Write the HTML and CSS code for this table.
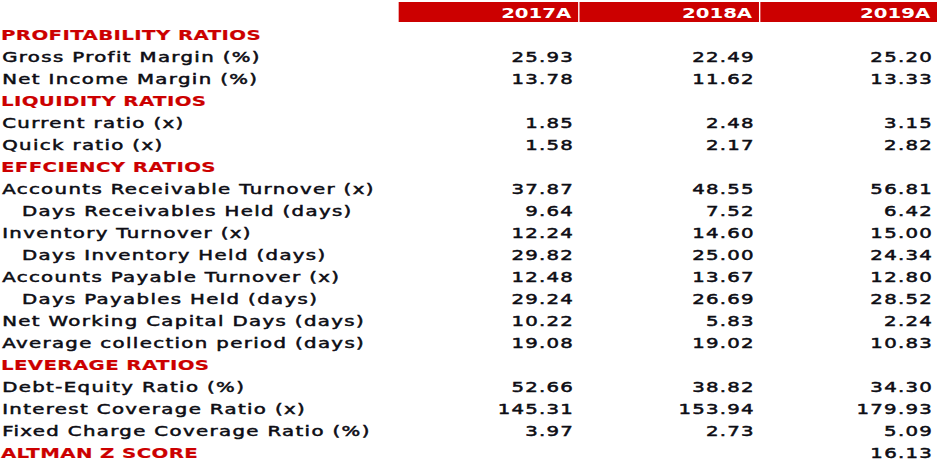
FILE: index.html
```html
<!DOCTYPE html>
<html lang="en">
<head>
<meta charset="utf-8">
<title>Financial Ratios</title>
<link rel="stylesheet" href="styles.css">
</head>
<body>
<div class="sheet">
  <div class="row head">
    <div class="cell blank"></div>
    <div class="cell year">2017A</div>
    <div class="cell year sep">2018A</div>
    <div class="cell year sep">2019A</div>
  </div>
  <div class="body">
    <div class="row"><div class="cell title">PROFITABILITY RATIOS</div><div class="cell"></div><div class="cell"></div><div class="cell"></div></div>
    <div class="row"><div class="cell label">Gross Profit Margin (%)</div><div class="cell num">25.93</div><div class="cell num">22.49</div><div class="cell num">25.20</div></div>
    <div class="row"><div class="cell label">Net Income Margin (%)</div><div class="cell num">13.78</div><div class="cell num">11.62</div><div class="cell num">13.33</div></div>
    <div class="row"><div class="cell title">LIQUIDITY RATIOS</div><div class="cell"></div><div class="cell"></div><div class="cell"></div></div>
    <div class="row"><div class="cell label">Current ratio (x)</div><div class="cell num">1.85</div><div class="cell num">2.48</div><div class="cell num">3.15</div></div>
    <div class="row"><div class="cell label">Quick ratio (x)</div><div class="cell num">1.58</div><div class="cell num">2.17</div><div class="cell num">2.82</div></div>
    <div class="row"><div class="cell title">EFFCIENCY RATIOS</div><div class="cell"></div><div class="cell"></div><div class="cell"></div></div>
    <div class="row"><div class="cell label">Accounts Receivable Turnover (x)</div><div class="cell num">37.87</div><div class="cell num">48.55</div><div class="cell num">56.81</div></div>
    <div class="row"><div class="cell label indent">Days Receivables Held (days)</div><div class="cell num">9.64</div><div class="cell num">7.52</div><div class="cell num">6.42</div></div>
    <div class="row"><div class="cell label">Inventory Turnover (x)</div><div class="cell num">12.24</div><div class="cell num">14.60</div><div class="cell num">15.00</div></div>
    <div class="row"><div class="cell label indent">Days Inventory Held (days)</div><div class="cell num">29.82</div><div class="cell num">25.00</div><div class="cell num">24.34</div></div>
    <div class="row"><div class="cell label">Accounts Payable Turnover (x)</div><div class="cell num">12.48</div><div class="cell num">13.67</div><div class="cell num">12.80</div></div>
    <div class="row"><div class="cell label indent">Days Payables Held (days)</div><div class="cell num">29.24</div><div class="cell num">26.69</div><div class="cell num">28.52</div></div>
    <div class="row"><div class="cell label">Net Working Capital Days (days)</div><div class="cell num">10.22</div><div class="cell num">5.83</div><div class="cell num">2.24</div></div>
    <div class="row"><div class="cell label">Average collection period (days)</div><div class="cell num">19.08</div><div class="cell num">19.02</div><div class="cell num">10.83</div></div>
    <div class="row"><div class="cell title">LEVERAGE RATIOS</div><div class="cell"></div><div class="cell"></div><div class="cell"></div></div>
    <div class="row"><div class="cell label">Debt-Equity Ratio (%)</div><div class="cell num">52.66</div><div class="cell num">38.82</div><div class="cell num">34.30</div></div>
    <div class="row"><div class="cell label">Interest Coverage Ratio (x)</div><div class="cell num">145.31</div><div class="cell num">153.94</div><div class="cell num">179.93</div></div>
    <div class="row"><div class="cell label">Fixed Charge Coverage Ratio (%)</div><div class="cell num">3.97</div><div class="cell num">2.73</div><div class="cell num">5.09</div></div>
    <div class="row"><div class="cell title">ALTMAN Z SCORE</div><div class="cell"></div><div class="cell"></div><div class="cell num">16.13</div></div>
  </div>
</div>
</body>
</html>
```
FILE: styles.css
```css
html, body {
  margin: 0;
  padding: 0;
  background: #ffffff;
  overflow: hidden;
}

.sheet {
  width: 684px;
  padding-top: 2px;
  transform: scaleX(1.37);
  transform-origin: left top;
  font-family: "DejaVu Sans", "Liberation Sans", sans-serif;
  font-size: 14.4px;
  color: #0d0d14;
}

.row {
  display: grid;
  grid-template-columns: 290.5px 131.5px 132px 130px;
  height: 22px;
  line-height: 22px;
  white-space: nowrap;
}

.row.head {
  height: 20px;
  margin-bottom: 2px;
}

.year {
  background: #cc0000;
  color: #ffffff;
  font-weight: bold;
  text-align: right;
  padding: 2px 5px 0 0;
  line-height: 18px;
  height: 20px;
  box-sizing: border-box;
}

.year.sep {
  border-left: 1px solid #ffffff;
}

.title {
  color: #cc0000;
  font-weight: bold;
  letter-spacing: 0.3px;
  padding-left: 0.7px;
  -webkit-text-stroke: 0.2px #cc0000;
}

.label {
  letter-spacing: 1px;
  padding-left: 1.6px;
  -webkit-text-stroke: 0.5px #0d0d14;
}

.label.indent {
  padding-left: 16px;
}

.num {
  text-align: right;
  letter-spacing: 0.9px;
  padding-right: 3px;
  -webkit-text-stroke: 0.5px #0d0d14;
}
```
